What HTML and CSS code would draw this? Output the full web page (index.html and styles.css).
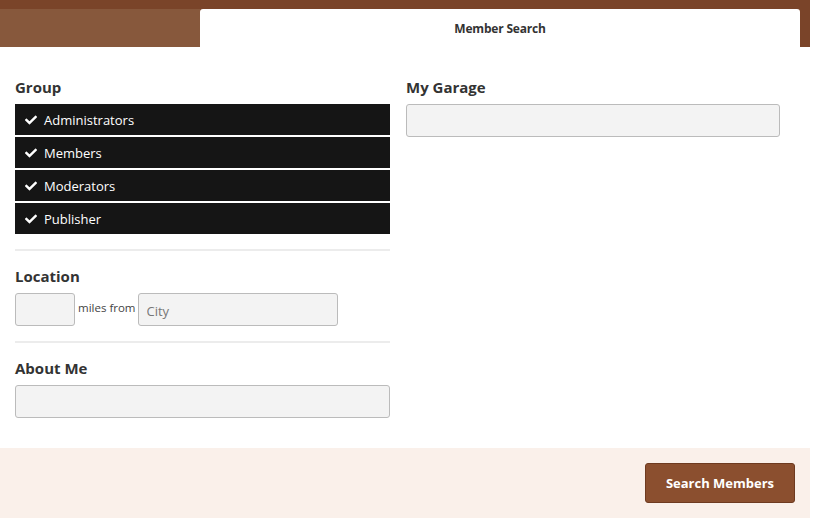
FILE: index.html
```html
<!DOCTYPE html>
<html lang="en">
<head>
  <meta charset="UTF-8" />
  <title>Member Search</title>
  <link rel="stylesheet" href="styles.css">
</head>
<body>
<div class="page">
  <div class="tabs">
    <div class="tab-side"></div>
    <div class="tab-active">Member Search</div>
  </div>

  <form class="search-form">
    <div class="col">
      <h3>Group</h3>
      <ul class="groups">
        <li><svg class="check" viewBox="0 0 512 512"><path d="M173.9 439.4 7.5 273c-10-10-10-26.2 0-36.2l36.2-36.2c10-10 26.2-10 36.2 0L192 312.7 432.1 72.6c10-10 26.2-10 36.2 0l36.2 36.2c10 10 10 26.2 0 36.2L210.1 439.4c-10 10-26.2 10-36.2 0z"/></svg>Administrators</li>
        <li><svg class="check" viewBox="0 0 512 512"><path d="M173.9 439.4 7.5 273c-10-10-10-26.2 0-36.2l36.2-36.2c10-10 26.2-10 36.2 0L192 312.7 432.1 72.6c10-10 26.2-10 36.2 0l36.2 36.2c10 10 10 26.2 0 36.2L210.1 439.4c-10 10-26.2 10-36.2 0z"/></svg>Members</li>
        <li><svg class="check" viewBox="0 0 512 512"><path d="M173.9 439.4 7.5 273c-10-10-10-26.2 0-36.2l36.2-36.2c10-10 26.2-10 36.2 0L192 312.7 432.1 72.6c10-10 26.2-10 36.2 0l36.2 36.2c10 10 10 26.2 0 36.2L210.1 439.4c-10 10-26.2 10-36.2 0z"/></svg>Moderators</li>
        <li><svg class="check" viewBox="0 0 512 512"><path d="M173.9 439.4 7.5 273c-10-10-10-26.2 0-36.2l36.2-36.2c10-10 26.2-10 36.2 0L192 312.7 432.1 72.6c10-10 26.2-10 36.2 0l36.2 36.2c10 10 10 26.2 0 36.2L210.1 439.4c-10 10-26.2 10-36.2 0z"/></svg>Publisher</li>
      </ul>

      <hr class="sep">

      <h3>Location</h3>
      <div class="location">
        <input type="text" class="field miles">
        <span class="miles-label">miles from</span>
        <input type="text" class="field city" placeholder="City">
      </div>

      <hr class="sep">

      <h3>About Me</h3>
      <input type="text" class="field">
    </div>

    <div class="col">
      <h3>My Garage</h3>
      <input type="text" class="field">
    </div>
  </form>

  <div class="footer">
    <button type="button">Search Members</button>
  </div>
</div>
</body>
</html>
```

FILE: styles.css
```css
body {
  margin: 0;
  font-family: 'Open Sans', 'Liberation Sans', sans-serif;
  color: #333;
  background-color: #fff;
}

.page {
  width: 810px;
}

.tabs {
  display: flex;
  background-color: #7a4429;
  padding: 9px 10px 0 0;
}

.tab-side {
  width: 200px;
  height: 38px;
  background-color: #87583c;
}

.tab-active {
  flex: 1;
  height: 38px;
  line-height: 40px;
  background-color: #fff;
  border-radius: 3px 3px 0 0;
  text-align: center;
  font-size: 12px;
  font-weight: 700;
  color: #333;
  letter-spacing: -0.2px;
}

.search-form {
  display: grid;
  grid-template-columns: 375px 374px;
  column-gap: 16px;
  padding: 30px 15px 30px 15px;
}

h3 {
  margin: 0 0 5px;
  font-size: 15px;
  line-height: 20px;
  padding-bottom: 2px;
  font-weight: 700;
  color: #333;
}

.groups {
  list-style: none;
  margin: 0;
  padding: 0;
  display: flex;
  flex-direction: column;
  gap: 2px;
}

.groups li {
  display: flex;
  align-items: center;
  height: 31px;
  padding-left: 10px;
  background-color: #151515;
  color: #fff;
  font-size: 13px;
}

.check {
  width: 12px;
  height: 12px;
  fill: #fff;
  margin-right: 7px;
}

.sep {
  border: none;
  height: 2px;
  background-color: #ececec;
  margin: 15px 0 15px;
}

.field {
  display: block;
  box-sizing: border-box;
  width: 100%;
  height: 33px;
  padding: 0 8px;
  background-color: #f3f3f3;
  border: 1px solid #bbb;
  border-radius: 3px;
  font-family: inherit;
  font-size: 13px;
  color: #333;
}

.field::placeholder {
  color: #777;
}

.location {
  display: flex;
  align-items: flex-start;
}

.field.miles {
  width: 60px;
}

.miles-label {
  font-size: 11.5px;
  color: #444;
  padding: 7px 2px 0 3px;
}

.field.city {
  width: 200px;
  padding-top: 3px;
}

.footer {
  display: flex;
  justify-content: flex-end;
  background-color: #faf0ea;
  padding: 15px;
}

button {
  width: 150px;
  height: 40px;
  background-color: #8b4f2f;
  border: 1px solid #6e3a20;
  border-radius: 3px;
  color: #fff;
  font-family: inherit;
  font-size: 13px;
  font-weight: 700;
  cursor: pointer;
}
```
